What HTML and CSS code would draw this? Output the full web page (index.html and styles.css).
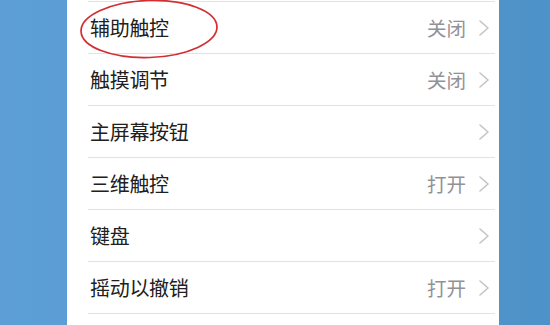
FILE: index.html
```html
<!DOCTYPE html>
<html lang="zh-CN">
<head>
<meta charset="utf-8">
<link rel="stylesheet" href="styles.css">
</head>
<body>
<div class="stage">
  <div class="panel">
    <div class="list">
      <div class="row"><span class="label">辅助触控</span><span class="value">关闭</span><svg class="chev" viewBox="0 0 10 16"><polyline points="1,1 9,8 1,15"/></svg></div>
      <div class="row"><span class="label">触摸调节</span><span class="value">关闭</span><svg class="chev" viewBox="0 0 10 16"><polyline points="1,1 9,8 1,15"/></svg></div>
      <div class="row"><span class="label">主屏幕按钮</span><span class="value"></span><svg class="chev" viewBox="0 0 10 16"><polyline points="1,1 9,8 1,15"/></svg></div>
      <div class="row"><span class="label">三维触控</span><span class="value">打开</span><svg class="chev" viewBox="0 0 10 16"><polyline points="1,1 9,8 1,15"/></svg></div>
      <div class="row"><span class="label">键盘</span><span class="value"></span><svg class="chev" viewBox="0 0 10 16"><polyline points="1,1 9,8 1,15"/></svg></div>
      <div class="row"><span class="label">摇动以撤销</span><span class="value">打开</span><svg class="chev" viewBox="0 0 10 16"><polyline points="1,1 9,8 1,15"/></svg></div>
      <div class="row last"></div>
    </div>
    <svg class="circle" viewBox="0 0 150 62" width="150" height="62">
      <ellipse cx="75" cy="30" rx="68" ry="28.5" transform="rotate(-2 75 30)"/>
    </svg>
  </div>
</div>
</body>
</html>
```
FILE: styles.css
```css
html, body {
  margin: 0;
  padding: 0;
}
body {
  width: 550px;
  height: 325px;
  overflow: hidden;
  background: linear-gradient(90deg, #5c9fd6 0%, #5898cf 50%, #4d92c8 100%);
  font-family: "Noto Sans CJK SC", "Noto Sans", sans-serif;
}
.stage {
  display: flex;
  height: 325px;
  padding-left: 67px;
}
.panel {
  position: relative;
  width: 432px;
  height: 325px;
  background: #ffffff;
  padding-top: 1px;
  box-sizing: border-box;
}
.list {
  display: flex;
  flex-direction: column;
  margin-left: 21px;
  margin-right: 4px;
}
.row {
  display: flex;
  align-items: center;
  height: 51px;
  border-top: 1px solid #e2e2e4;
  padding-left: 2px;
  padding-right: 6px;
}
.row.last {
  height: 11px;
}
.label {
  flex: 1;
  font-size: 20px;
  color: #202020;
  letter-spacing: -0.3px;
}
.value {
  font-size: 19.5px;
  color: #929296;
  margin-right: 13px;
}
.chev {
  width: 10px;
  height: 16px;
  fill: none;
  stroke: #c3c3c8;
  stroke-width: 1.6;
  stroke-linecap: round;
  stroke-linejoin: round;
}
.circle {
  position: absolute;
  left: 7px;
  top: -1px;
  overflow: visible;
}
.circle ellipse {
  fill: none;
  stroke: #d22f33;
  stroke-width: 1.7;
}
```
